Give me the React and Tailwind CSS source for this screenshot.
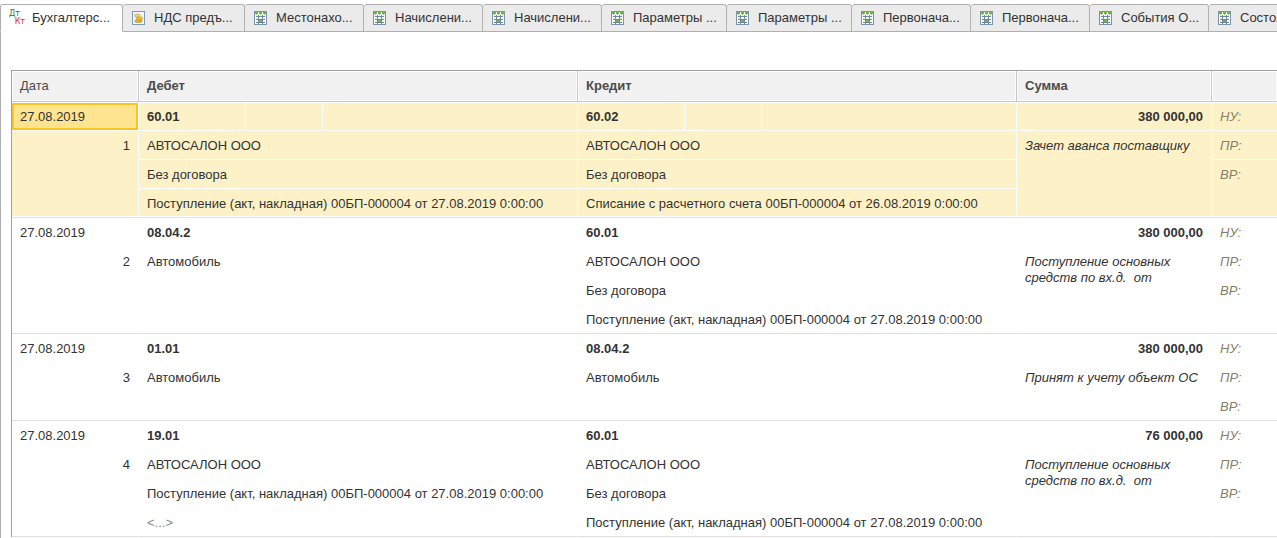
import clsx from 'clsx'

const tabs = [
  { label: 'Бухгалтерс...', icon: 'dtkt', width: 'w-[123px]' },
  { label: 'НДС предъ...', icon: 'coins', width: 'w-[122px]' },
  { label: 'Местонахо...', icon: 'grid', width: 'w-[119px]' },
  { label: 'Начислени...', icon: 'grid', width: 'w-[119px]' },
  { label: 'Начислени...', icon: 'grid', width: 'w-[119px]' },
  { label: 'Параметры ...', icon: 'grid', width: 'w-[125px]' },
  { label: 'Параметры ...', icon: 'grid', width: 'w-[125px]' },
  { label: 'Первонача...', icon: 'grid', width: 'w-[119px]' },
  { label: 'Первонача...', icon: 'grid', width: 'w-[119px]' },
  { label: 'События О...', icon: 'grid', width: 'w-[119px]' },
  { label: 'Состояни...', icon: 'grid', width: 'w-[119px]' },
]

const entries = [
  {
    date: '27.08.2019',
    debit: ['60.01', 'АВТОСАЛОН ООО', 'Без договора', 'Поступление (акт, накладная) 00БП-000004 от 27.08.2019 0:00:00'],
    credit: ['60.02', 'АВТОСАЛОН ООО', 'Без договора', 'Списание с расчетного счета 00БП-000004 от 26.08.2019 0:00:00'],
    sum: '380 000,00',
    comment: 'Зачет аванса поставщику',
  },
  {
    date: '27.08.2019',
    debit: ['08.04.2', 'Автомобиль'],
    credit: ['60.01', 'АВТОСАЛОН ООО', 'Без договора', 'Поступление (акт, накладная) 00БП-000004 от 27.08.2019 0:00:00'],
    sum: '380 000,00',
    comment: 'Поступление основных средств по вх.д.  от',
  },
  {
    date: '27.08.2019',
    debit: ['01.01', 'Автомобиль'],
    credit: ['08.04.2', 'Автомобиль'],
    sum: '380 000,00',
    comment: 'Принят к учету объект ОС',
  },
  {
    date: '27.08.2019',
    debit: ['19.01', 'АВТОСАЛОН ООО', 'Поступление (акт, накладная) 00БП-000004 от 27.08.2019 0:00:00', '<...>'],
    credit: ['60.01', 'АВТОСАЛОН ООО', 'Без договора', 'Поступление (акт, накладная) 00БП-000004 от 27.08.2019 0:00:00'],
    sum: '76 000,00',
    comment: 'Поступление основных средств по вх.д.  от',
  },
]

const taxLabels = ['НУ:', 'ПР:', 'ВР:']

function GridIcon() {
  return (
    <svg width="13" height="14" viewBox="0 0 13 14" shapeRendering="crispEdges">
      <rect width="13" height="14" fill="#7d93a8" />
      <rect x="1" y="1" width="11" height="12" fill="#f4f8fb" />
      <path d="M1 1h3v2H1zM5 1h3v2H5zM9 1h3v2H9z" fill="#6fb445" />
      <path d="M2 3h1v1H2zM6 3h1v1H6zM10 3h1v1h-1z" fill="#8cc668" />
      <path d="M4 4h1v9H4zM8 4h1v9H8zM2 5h9v1H2zM2 8h9v1H2zM2 11h9v1H2z" fill="#71879a" />
      <rect x="5" y="9" width="3" height="2" fill="#6fb445" />
    </svg>
  )
}

function CoinsIcon() {
  return (
    <svg width="13" height="14" viewBox="0 0 13 14">
      <rect x="0.5" y="0.5" width="12" height="13" fill="#eef5fb" stroke="#7f9ab5" />
      <ellipse cx="6.5" cy="10" rx="3.7" ry="1.5" fill="#e8b02c" stroke="#b77f12" strokeWidth="0.6" />
      <ellipse cx="7.5" cy="7.3" rx="3.3" ry="1.4" fill="#f3c43a" stroke="#c08a16" strokeWidth="0.6" />
      <ellipse cx="5.4" cy="4.6" rx="3" ry="1.4" fill="#f8d865" stroke="#c08a16" strokeWidth="0.6" />
    </svg>
  )
}

function DtKtIcon() {
  return (
    <span className="flex w-4 flex-col font-['DejaVu_Sans',sans-serif] text-[8px] leading-2">
      <span className="self-start text-[#00893f]">Дт</span>
      <span className="self-end text-[#d3333a]">Кт</span>
    </span>
  )
}

const icons = { dtkt: DtKtIcon, coins: CoinsIcon, grid: GridIcon }

function Tab({ label, icon, width, active }) {
  const Icon = icons[icon]
  return (
    <button
      type="button"
      role="tab"
      aria-selected={active}
      className={clsx(
        'flex h-7 shrink-0 items-center rounded-t-[3px] border-t border-r border-b border-[#b0b0b0] whitespace-pre',
        active ? 'gap-[7px] border-l border-b-transparent bg-white pl-2' : 'gap-[9px] bg-[#ebebeb] pl-[9px]',
        width,
      )}
    >
      <Icon />
      <span>{label}</span>
    </button>
  )
}

const base = 'border-r align-top'

function fill(selected) {
  return selected ? 'border-r-white bg-[#fdf1c7]' : 'border-r-transparent'
}

function Line({ text, first, last, selected }) {
  const cell = clsx(
    base,
    fill(selected),
    'h-[29px] pl-2 whitespace-nowrap',
    selected && first ? 'border-t border-t-white pt-[6px]' : 'pt-[7px]',
    last && 'border-b border-b-[#e0e0e0]',
    selected && !last && 'border-b border-b-white',
    selected && last && 'shadow-[inset_0_-1px_0_white]',
  )
  if (first) {
    return (
      <>
        <td className={clsx(cell, 'font-bold')}>{text}</td>
        <td className={cell} />
        <td className={cell} />
      </>
    )
  }
  return (
    <td colSpan={3} className={clsx(cell, text === '<...>' && 'text-[#888]')}>
      {text}
    </td>
  )
}

function Entry({ entry, number, selected }) {
  const count = Math.max(entry.debit.length, entry.credit.length, taxLabels.length)
  const rest = count - 1
  const top = selected ? 'border-t border-b border-t-white border-b-white pt-[6px]' : 'pt-[7px]'
  const bottom = clsx('border-b border-b-[#e0e0e0] pt-[7px]', selected && 'shadow-[inset_0_-1px_0_white]')
  const tax = clsx('pl-2 align-top text-[#857f68] italic', selected && 'bg-[#fdf1c7]')

  return (
    <tbody>
      {Array.from({ length: count }, (_, i) => (
        <tr key={i}>
          {i === 0 && (
            <td
              className={clsx(
                base,
                top,
                'pl-2',
                selected ? 'border-r-white bg-[#ffe48f] shadow-[inset_0_0_0_2px_#f9c522]' : 'border-r-transparent',
              )}
            >
              {entry.date}
            </td>
          )}
          {i === 1 && (
            <td rowSpan={rest} className={clsx(base, fill(selected), bottom, 'pr-2 text-right')}>
              {number}
            </td>
          )}
          <Line text={entry.debit[i]} first={i === 0} last={i === rest} selected={selected} />
          <Line text={entry.credit[i]} first={i === 0} last={i === rest} selected={selected} />
          {i === 0 && (
            <td className={clsx(base, fill(selected), top, 'pr-2 text-right font-bold')}>{entry.sum}</td>
          )}
          {i === 1 && (
            <td rowSpan={rest} className={clsx(base, fill(selected), bottom, 'pr-2 pl-2 whitespace-pre-wrap italic')}>
              {entry.comment}
            </td>
          )}
          {i === 0 && <td className={clsx(tax, top)}>{taxLabels[i]}</td>}
          {i === 1 && (
            <td className={clsx(tax, 'pt-[7px]', selected && 'border-b border-b-white')}>{taxLabels[i]}</td>
          )}
          {i === 2 && (
            <td rowSpan={count - 2} className={clsx(tax, bottom)}>
              {taxLabels[i]}
            </td>
          )}
        </tr>
      ))}
    </tbody>
  )
}

export default function App() {
  const head = 'h-[31px] border-b border-[#c6c6c6] bg-[#f1f1f1] pl-2 text-left text-[#4c4c4c] shadow-[inset_0_0_0_1px_white]'

  return (
    <div className="flex h-screen flex-col overflow-hidden bg-white pt-1 font-['Liberation_Sans',Arial,sans-serif] text-[13px] leading-4 text-[#333]">
      <div role="tablist" className="flex shrink-0">
        {tabs.map((tab, i) => (
          <Tab key={i} {...tab} active={i === 0} />
        ))}
      </div>
      <div className="grow border-l border-[#b0b0b0] pt-[38px] pl-[10px]">
        <table className="w-full table-fixed border-separate border-spacing-0 border-t border-l border-[#a0a0a0]">
          <colgroup>
            <col className="w-[127px]" />
            <col className="w-[107px]" />
            <col className="w-[77px]" />
            <col className="w-[255px]" />
            <col className="w-[107px]" />
            <col className="w-[77px]" />
            <col className="w-[255px]" />
            <col className="w-[195px]" />
            <col />
          </colgroup>
          <thead>
            <tr>
              <th className={clsx(head, 'border-r font-normal')}>Дата</th>
              <th colSpan={3} className={clsx(head, 'border-r')}>Дебет</th>
              <th colSpan={3} className={clsx(head, 'border-r')}>Кредит</th>
              <th className={clsx(head, 'border-r')}>Сумма</th>
              <td className={head} />
            </tr>
          </thead>
          {entries.map((entry, i) => (
            <Entry key={i} entry={entry} number={i + 1} selected={i === 0} />
          ))}
        </table>
      </div>
    </div>
  )
}
